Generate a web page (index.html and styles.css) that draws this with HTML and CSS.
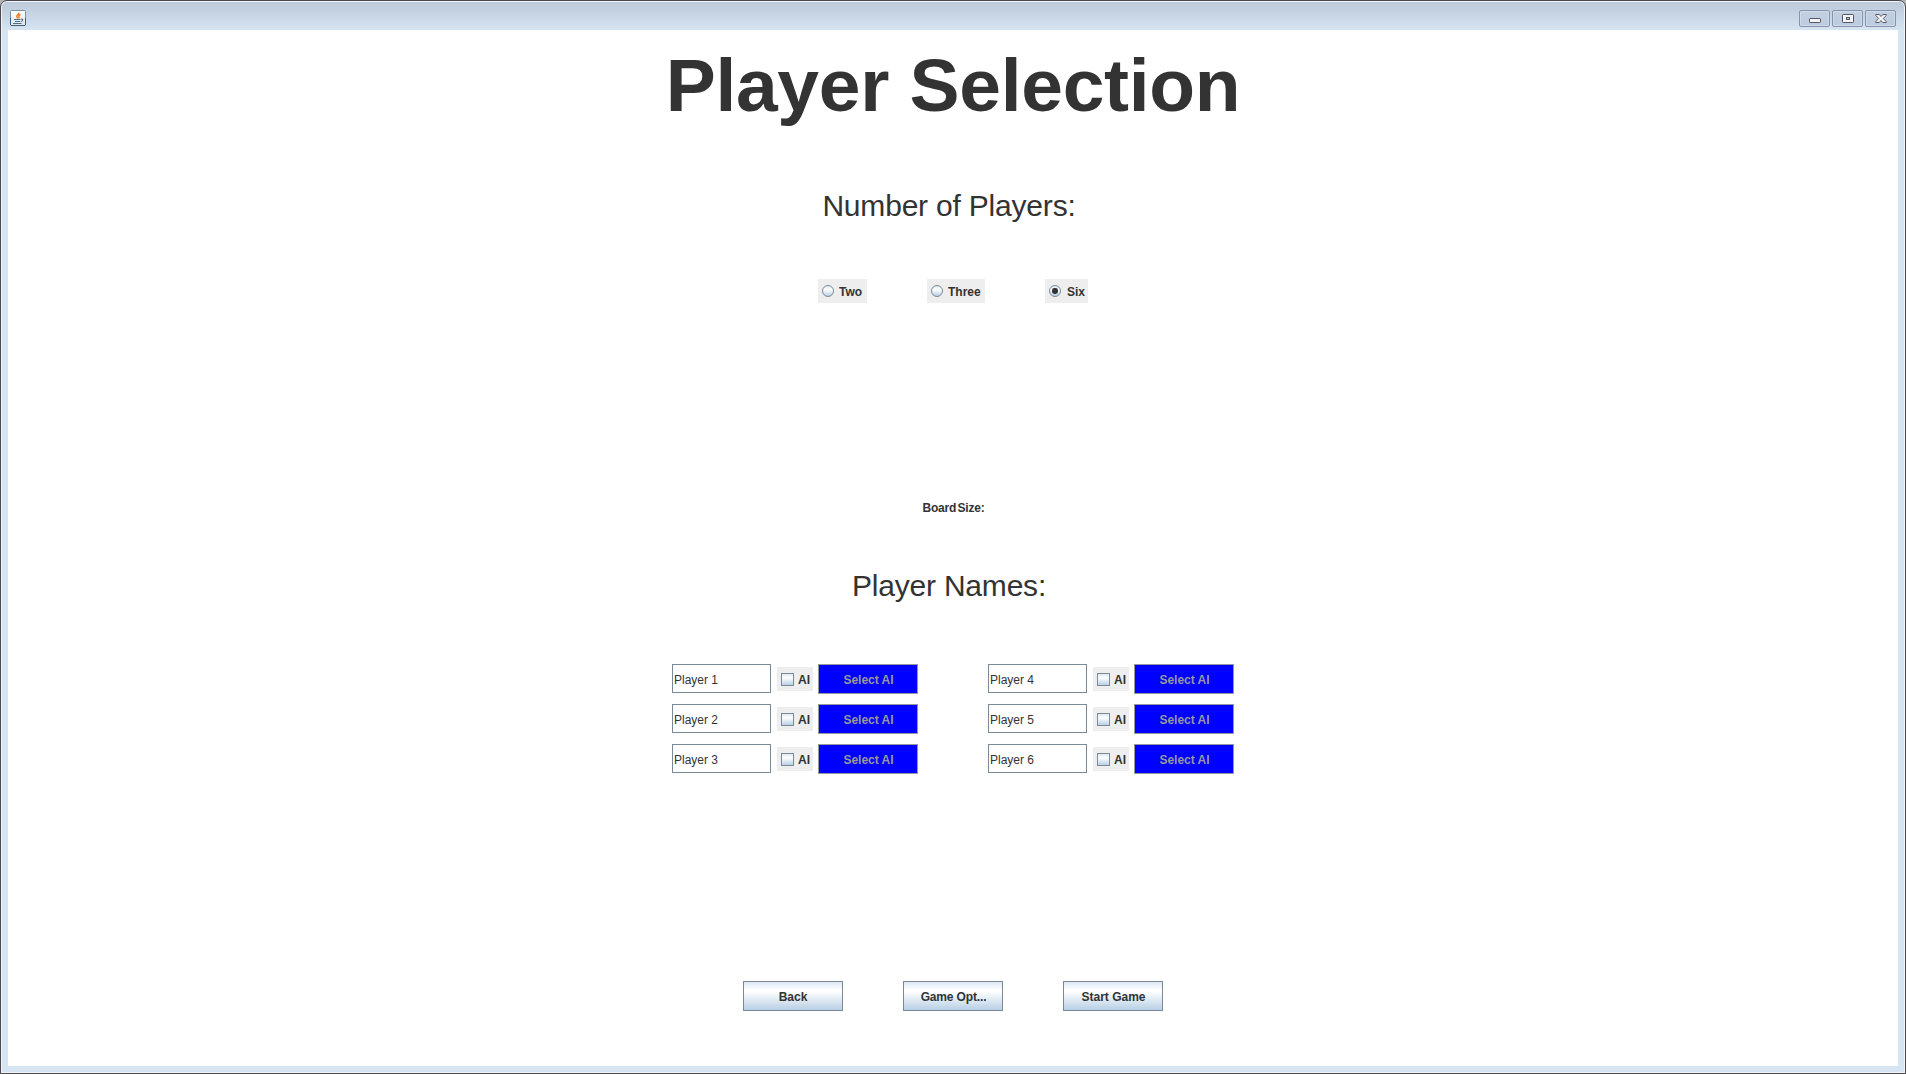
FILE: index.html
```html
<!DOCTYPE html>
<html lang="en">
<head>
<meta charset="utf-8">
<title>Player Selection</title>
<link rel="stylesheet" href="styles.css">
</head>
<body>
<div class="window">
  <header class="titlebar">
    <svg class="app-icon" width="16" height="16" viewBox="0 0 16 16">
      <defs><linearGradient id="cup" x1="0" y1="0" x2="0" y2="1"><stop offset="0" stop-color="#fff"/><stop offset="1" stop-color="#dfe3e6"/></linearGradient></defs>
      <rect x=".5" y=".5" width="15" height="15" rx="1" fill="url(#cup)" stroke="#76909f"/>
      <path d="M.5 15V8M15.500 15V8M1 15.500h14" stroke="#396282" fill="none"/>
      <path d="M8.800 2.500c.8 1.700-2.600 2.300-2 4.200.2.700.9 1 .9 1.800M10.500 4.500c-1.400.6-2.500 1.200-1.600 2.300.5.600.2 1.100-.3 1.500" stroke="#ee7d24" stroke-width="1.400" fill="none"/>
      <path d="M4 9.500h6.500M5 11.500h5M3 13.500h8.500M11 9.200c2.600-.5 2.200 2-.2 2.300" stroke="#4d7088" stroke-width="1.100" fill="none"/>
    </svg>
    <div class="controls">
      <span class="control"><svg width="12" height="10" viewBox="0 0 12 10"><rect x=".5" y="4.500" width="11" height="4" rx=".7" fill="#f5f5f5" stroke="#535666"/></svg></span>
      <span class="control"><svg width="12" height="10" viewBox="0 0 12 10"><rect x=".5" y=".5" width="11" height="8" rx=".7" fill="#f5f5f5" stroke="#535666"/><rect x="4.500" y="3.500" width="3" height="2" fill="#b9c9de" stroke="#535666"/></svg></span>
      <span class="control"><svg width="12" height="10" viewBox="0 0 12 10"><path d="M.8.5h3.400L6 2.500 7.800.5h3.400v1L8.300 4.500l2.900 3v1H7.800L6 6.500 4.200 8.500H.8v-1l2.900-3-2.900-3z" fill="#f5f5f5" stroke="#535666"/></svg></span>
    </div>
  </header>
  <main class="content">
    <h1 class="title">Player Selection</h1>
    <h2 class="heading heading-count">Number of Players:</h2>
    <div class="counts">
      <span class="option two"><i class="radio"></i><span>Two</span></span>
      <span class="option three"><i class="radio"></i><span>Three</span></span>
      <span class="option six"><i class="radio checked"></i><span>Six</span></span>
    </div>
    <div class="board-size">Board<span class="tight"> </span>Size:</div>
    <h2 class="heading heading-names">Player Names:</h2>
    <div class="players">
      <div class="player"><input class="name" value="Player 1"><span class="ai"><i class="check"></i>AI</span><button class="select" disabled>Select AI</button></div>
      <div class="player"><input class="name" value="Player 4"><span class="ai"><i class="check"></i>AI</span><button class="select" disabled>Select AI</button></div>
      <div class="player"><input class="name" value="Player 2"><span class="ai"><i class="check"></i>AI</span><button class="select" disabled>Select AI</button></div>
      <div class="player"><input class="name" value="Player 5"><span class="ai"><i class="check"></i>AI</span><button class="select" disabled>Select AI</button></div>
      <div class="player"><input class="name" value="Player 3"><span class="ai"><i class="check"></i>AI</span><button class="select" disabled>Select AI</button></div>
      <div class="player"><input class="name" value="Player 6"><span class="ai"><i class="check"></i>AI</span><button class="select" disabled>Select AI</button></div>
    </div>
    <div class="actions">
      <button class="action">Back</button>
      <button class="action game-options">Game Opt...</button>
      <button class="action start">Start Game</button>
    </div>
  </main>
</div>
</body>
</html>
```
FILE: styles.css
```css
* { box-sizing: border-box; }
html { background: #b4b4b4; }
body {
  margin: 0;
  overflow: hidden;
  font: bold 12px/14px "Liberation Sans", Arial, sans-serif;
  color: #333;
}
.window {
  width: 1906px;
  height: 1074px;
  padding: 0 7px 7px;
  border: 1px solid #4b484e;
  border-radius: 7px 7px 0 0;
  box-shadow: inset 0 0 0 1px #f0f5fa;
  background: linear-gradient(#bccada 0, #c1cfdf 8px, #d7e4f2 30px);
  display: flex;
  flex-direction: column;
}
.titlebar {
  height: 29px;
  display: flex;
  justify-content: space-between;
  padding: 9px 2px 0 2px;
}
.controls { display: flex; gap: 2px; }
.control {
  width: 31px;
  height: 17px;
  border: 1px solid #8593b0;
  border-radius: 2px;
  background: linear-gradient(#c3d0e1, #bccbdf);
  box-shadow: inset 0 0 0 1px #cfdbe9;
  display: flex;
  align-items: center;
  justify-content: center;
}
.content {
  flex: 1;
  background: #fff;
  display: flex;
  flex-direction: column;
  align-items: center;
}
.title { margin: 12px 0 0; font-size: 75px; line-height: 86px; height: 86px; letter-spacing: -.3px; }
.heading { font-size: 30px; line-height: 34px; height: 34px; font-weight: normal; letter-spacing: -.2px; }
.heading-count { margin: 61px 8px 0 0; }
.heading-names { margin: 54px 8px 0 0; }
.counts { display: flex; gap: 60px; margin-top: 56px; }
.option {
  height: 24px;
  background: #eee;
  display: flex;
  align-items: center;
  padding: 1px 0 0 4px;
  gap: 5px;
}
.two { width: 49px; }
.three { width: 58px; }
.six { width: 43px; gap: 6px; }
.radio {
  width: 12px;
  height: 12px;
  margin-top: -1px;
  border: 1px solid #7a8a99;
  border-radius: 50%;
  background: linear-gradient(#dde8f3, #fff 35%, #b8cfe5);
  display: flex;
  align-items: center;
  justify-content: center;
}
.checked::after { content: ""; width: 6px; height: 6px; border-radius: 40%; background: #333; }
.board-size { margin: 198px 0 0 1px; height: 14px; letter-spacing: -.2px; }
.tight { letter-spacing: -2px; }
.players {
  margin-top: 61px;
  display: grid;
  grid-template-columns: 246px 246px;
  column-gap: 70px;
  row-gap: 10px;
}
.player { display: flex; align-items: flex-start; height: 30px; }
.name {
  width: 99px;
  height: 29px;
  padding: 2px 1px 0;
  border: 1px solid #7a8a99;
  border-radius: 0;
  background: #fff;
  color: #333;
  font: 12px/14px "Liberation Sans", Arial, sans-serif;
}
.ai {
  width: 36px;
  height: 24px;
  margin: 3px 5px 0 6px;
  padding: 2px 0 0 4px;
  background: #eee;
  display: flex;
  align-items: center;
  gap: 4px;
}
.check {
  width: 13px;
  height: 13px;
  margin-top: -2px;
  border: 1px solid #7a8a99;
  background: linear-gradient(#dde8f3, #fff 35%, #b8cfe5);
}
.select, .action {
  width: 100px;
  height: 30px;
  padding: 1px 0 0;
  border: 1px solid #7a8a99;
  border-radius: 0;
  font: inherit;
  color: #333;
}
.select { padding: 2px 0 0 1px; background: #00f; border-color: #999; color: #999; }
.action { background: linear-gradient(#dde8f3, #fff 30%, #fff 34%, #b8cfe5); }
.game-options { letter-spacing: -.15px; padding-left: 1px; }
.start { padding-left: 1px; }
.actions { margin-top: 207px; display: flex; gap: 60px; }
```
